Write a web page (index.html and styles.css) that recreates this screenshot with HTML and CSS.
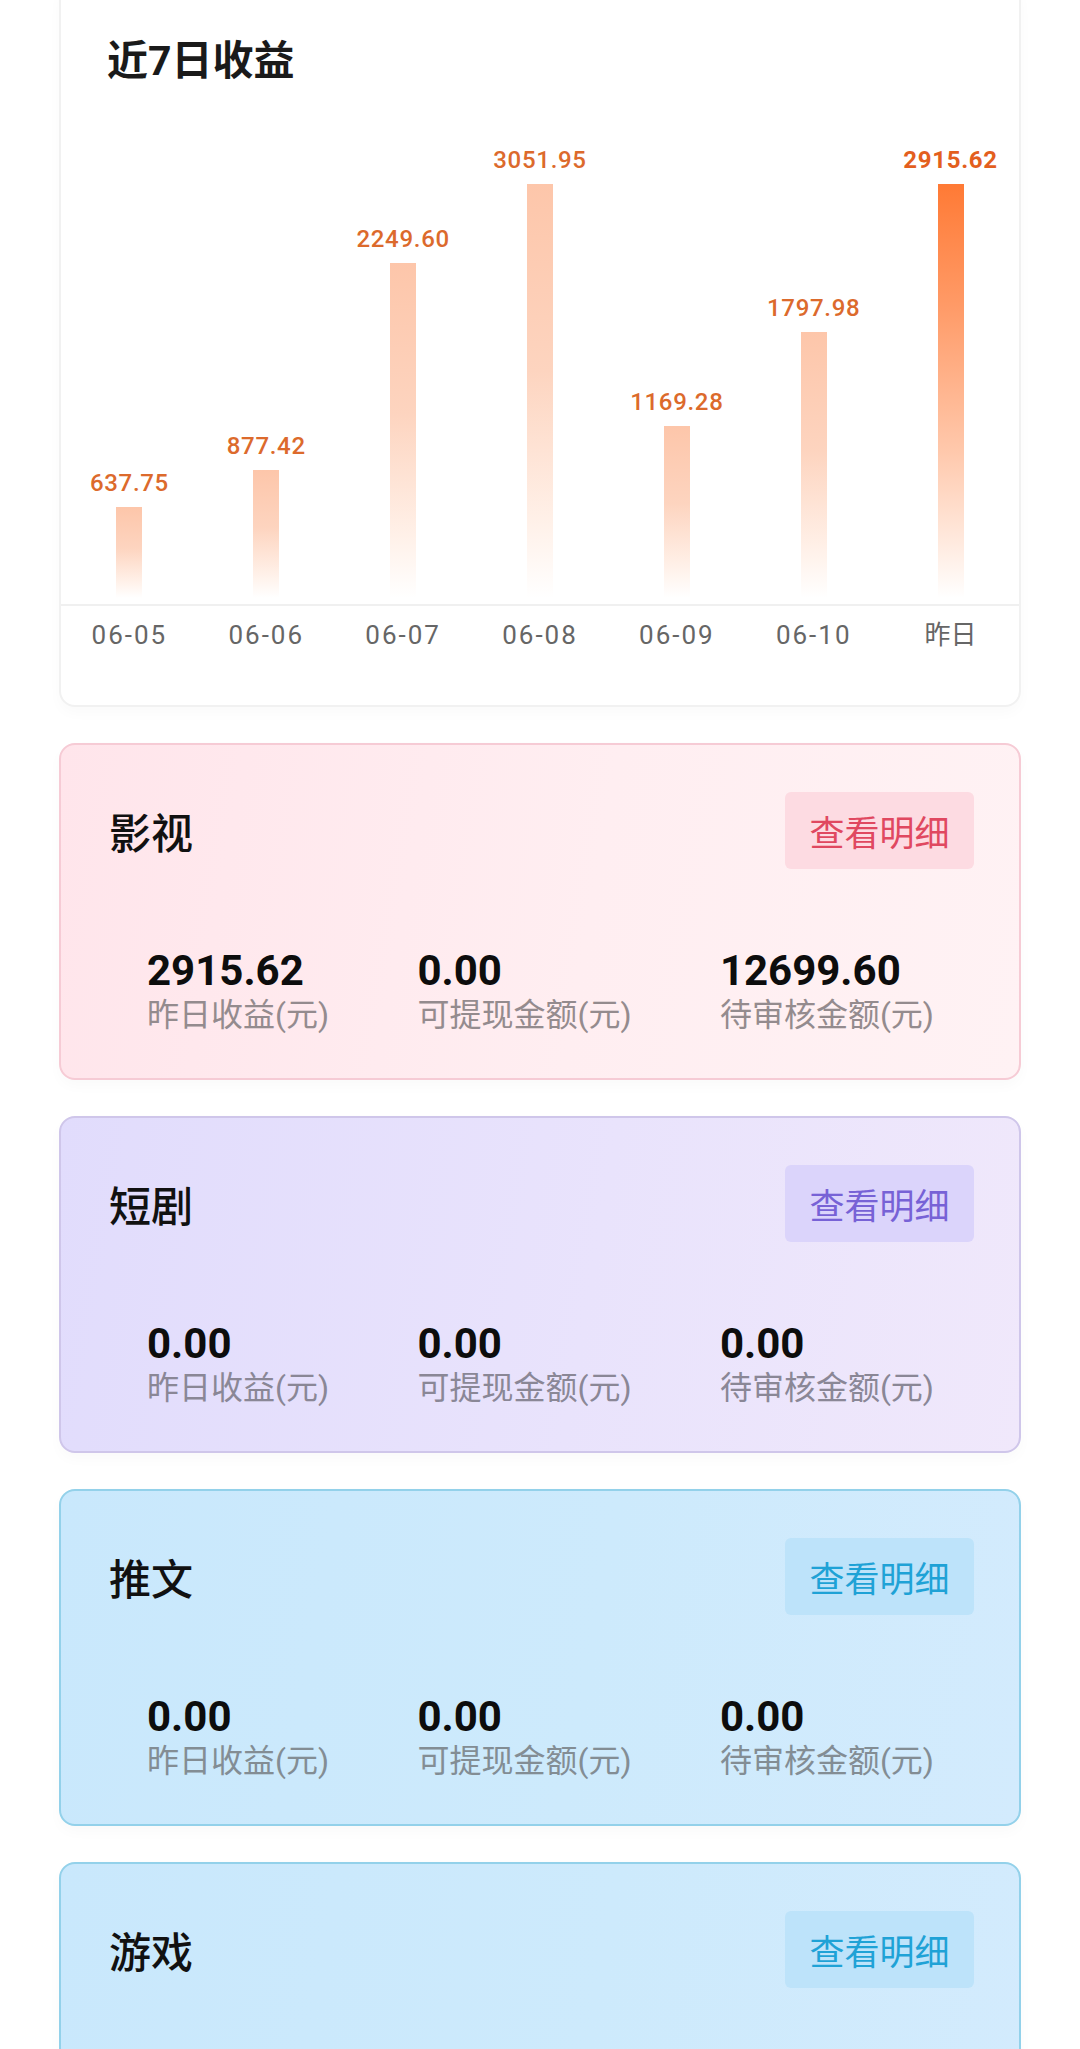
FILE: index.html
```html
<html>

<head>
  <meta charset="utf-8">
  <link rel="stylesheet" href="styles.css">
</head>

<body>
  <div class="page">

    <div class="card chart-card">
      <p class="chart-title">近7日收益</p>
      <div class="bars">
        <div class="bar-col">
          <span class="bar-value">637.75</span>
          <div class="bar" style="height: 91px"></div>
        </div>
        <div class="bar-col">
          <span class="bar-value">877.42</span>
          <div class="bar" style="height: 128px"></div>
        </div>
        <div class="bar-col">
          <span class="bar-value">2249.60</span>
          <div class="bar" style="height: 335px"></div>
        </div>
        <div class="bar-col">
          <span class="bar-value">3051.95</span>
          <div class="bar" style="height: 414px"></div>
        </div>
        <div class="bar-col">
          <span class="bar-value">1169.28</span>
          <div class="bar" style="height: 172px"></div>
        </div>
        <div class="bar-col">
          <span class="bar-value">1797.98</span>
          <div class="bar" style="height: 266px"></div>
        </div>
        <div class="bar-col bar-col-last">
          <span class="bar-value">2915.62</span>
          <div class="bar" style="height: 414px"></div>
        </div>
      </div>
      <div class="axis">
        <span>06-05</span>
        <span>06-06</span>
        <span>06-07</span>
        <span>06-08</span>
        <span>06-09</span>
        <span>06-10</span>
        <span class="axis-cn">昨日</span>
      </div>
    </div>

    <div class="card income-card movie">
      <div class="income-head">
        <p class="income-title">影视</p>
        <a class="detail-btn">查看明细</a>
      </div>
      <div class="stats">
        <div class="stat">
          <p class="stat-num">2915.62</p>
          <p class="stat-label">昨日收益(元)</p>
        </div>
        <div class="stat">
          <p class="stat-num">0.00</p>
          <p class="stat-label">可提现金额(元)</p>
        </div>
        <div class="stat">
          <p class="stat-num">12699.60</p>
          <p class="stat-label">待审核金额(元)</p>
        </div>
      </div>
    </div>

    <div class="card income-card drama">
      <div class="income-head">
        <p class="income-title">短剧</p>
        <a class="detail-btn">查看明细</a>
      </div>
      <div class="stats">
        <div class="stat">
          <p class="stat-num">0.00</p>
          <p class="stat-label">昨日收益(元)</p>
        </div>
        <div class="stat">
          <p class="stat-num">0.00</p>
          <p class="stat-label">可提现金额(元)</p>
        </div>
        <div class="stat">
          <p class="stat-num">0.00</p>
          <p class="stat-label">待审核金额(元)</p>
        </div>
      </div>
    </div>

    <div class="card income-card article">
      <div class="income-head">
        <p class="income-title">推文</p>
        <a class="detail-btn">查看明细</a>
      </div>
      <div class="stats">
        <div class="stat">
          <p class="stat-num">0.00</p>
          <p class="stat-label">昨日收益(元)</p>
        </div>
        <div class="stat">
          <p class="stat-num">0.00</p>
          <p class="stat-label">可提现金额(元)</p>
        </div>
        <div class="stat">
          <p class="stat-num">0.00</p>
          <p class="stat-label">待审核金额(元)</p>
        </div>
      </div>
    </div>

    <div class="card income-card article">
      <div class="income-head">
        <p class="income-title">游戏</p>
        <a class="detail-btn">查看明细</a>
      </div>
      <div class="stats">
        <div class="stat">
          <p class="stat-num">0.00</p>
          <p class="stat-label">昨日收益(元)</p>
        </div>
        <div class="stat">
          <p class="stat-num">0.00</p>
          <p class="stat-label">可提现金额(元)</p>
        </div>
        <div class="stat">
          <p class="stat-num">0.00</p>
          <p class="stat-label">待审核金额(元)</p>
        </div>
      </div>
    </div>

  </div>
</body>

</html>
```

FILE: styles.css
```css
body {
  margin: 0;
  background-color: #fff;
  font-family: Roboto, "Noto Sans CJK SC", sans-serif;
  color: #111;
}

p {
  margin: 0;
}

.page {
  margin-top: -16px;
  padding: 0 59px;
  display: flex;
  flex-direction: column;
  gap: 36px;
}

.card {
  border-radius: 16px;
  box-sizing: border-box;
  box-shadow: 0 6px 14px rgba(0, 0, 0, 0.025);
}

/* chart */
.chart-card {
  background-color: #fff;
  border: 2px solid #f1f1f1;
  padding: 0 0 55px 0;
}

.chart-title {
  padding: 55px 0 0 46px;
  font-size: 41px;
  line-height: 40px;
  font-weight: 700;
  color: #1a1a1a;
}

.bars {
  display: grid;
  grid-template-columns: repeat(7, 1fr);
  align-items: end;
  height: 523px;
  border-bottom: 2px solid #f0f0f0;
}

.bar-col {
  display: flex;
  flex-direction: column;
  align-items: center;
  padding-bottom: 6px;
}

.bar-value {
  font-size: 24px;
  line-height: 28px;
  font-weight: 500;
  letter-spacing: 0.7px;
  color: #dc6a2c;
  margin-bottom: 10px;
}

.bar {
  width: 26px;
  background: linear-gradient(to bottom, #fdc6aa 0%, #fdd4bf 45%, #fff1e9 82%, #ffffff 100%);
}

.bar-col-last .bar-value {
  font-weight: 700;
  color: #e35f1e;
}

.bar-col-last .bar {
  background: linear-gradient(to bottom, #ff7a35 0%, #ff9b68 30%, #ffc9ad 65%, #ffece2 88%, #ffffff 100%);
}

.axis {
  display: grid;
  grid-template-columns: repeat(7, 1fr);
  margin-top: 14px;
  text-align: center;
  font-size: 26px;
  line-height: 30px;
  letter-spacing: 2px;
  color: #666;
}

.axis-cn {
  letter-spacing: 0;
}

/* income cards */
.income-card {
  height: 337px;
  padding: 47px 45px 47px 48px;
  border: 2px solid;
}

.income-head {
  display: flex;
  justify-content: space-between;
  align-items: center;
  height: 77px;
}

.income-title {
  font-size: 42px;
  font-weight: 500;
  color: #111;
}

.detail-btn {
  width: 189px;
  height: 77px;
  border-radius: 6px;
  display: flex;
  align-items: center;
  justify-content: center;
  font-size: 35px;
}

.stats {
  display: flex;
  justify-content: space-between;
  margin-top: 78px;
  padding: 0 40px 0 38px;
}

.stat-num {
  font-size: 42px;
  line-height: 48px;
  font-weight: 700;
  color: #0d0d0d;
}

.stat-label {
  font-size: 32px;
  line-height: 40px;
  color: #8c8c8c;
}

.movie {
  background: linear-gradient(100deg, #ffe5eb 0%, #ffeef1 55%, #fff2f4 100%);
  border-color: #f6cbd5;
}

.movie .detail-btn {
  background-color: #fddbe2;
  color: #e04860;
}

.movie .stat-label {
  color: #948b8e;
}

.drama {
  background: linear-gradient(100deg, #e1dcfc 0%, #e9e3fc 55%, #f0e8fb 100%);
  border-color: #cfc6ea;
}

.drama .detail-btn {
  background-color: #dbd4fb;
  color: #7762d6;
}

.drama .stat-label {
  color: #8a8796;
}

.article {
  background: linear-gradient(100deg, #c9e8fc 0%, #cdeafc 55%, #d3ebfd 100%);
  border-color: #93d1ea;
}

.article .detail-btn {
  background-color: #bde3fa;
  color: #1fa2d6;
}

.article .stat-label {
  color: #838d94;
}
```
